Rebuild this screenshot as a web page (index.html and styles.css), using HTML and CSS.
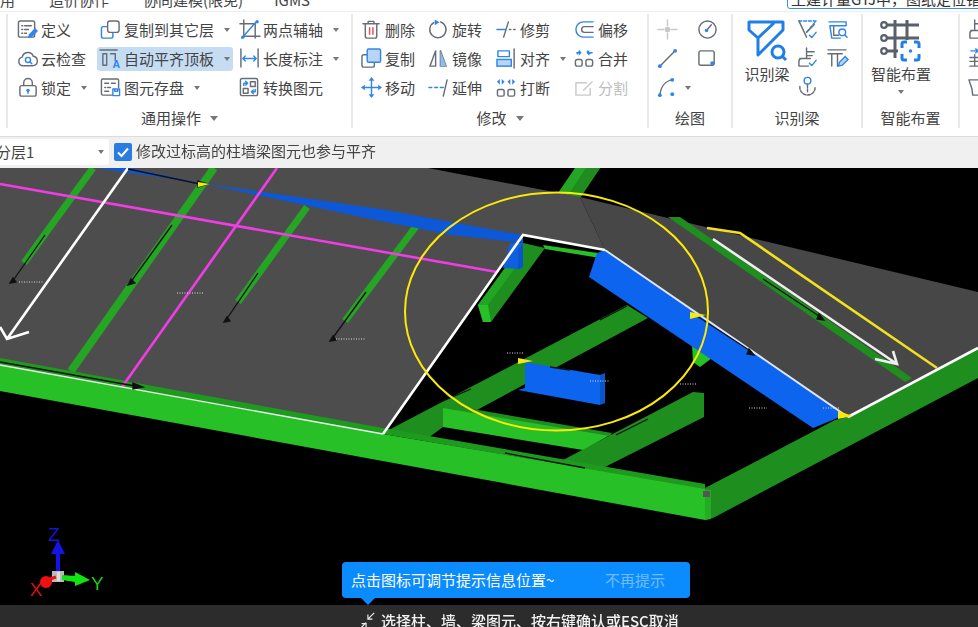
FILE: index.html
```html
<!DOCTYPE html>
<html lang="zh-CN">
<head>
<meta charset="utf-8">
<title>自动平齐顶板</title>
<link rel="stylesheet" href="styles.css">
</head>
<body>
<div class="app">
  <nav class="menu">
    <span>用</span>
    <span>造价协作</span>
    <span>协同建模(限免)</span>
    <span class="menu-last">IGMS</span>
    <div class="search">工建计量GTJ中，图纸定位错误</div>
  </nav>

  <section class="ribbon">
    <div class="group g-common">
      <div class="rows">
        <div class="tool"><svg class="ic" viewBox="0 0 22 22"><rect class="g" x="1.500" y="2" width="17" height="17" rx="2"/><path class="g" d="M5 7h1M8 7h7M5 11h1M8 11h4M5 15h1M8 15h2"/><path class="bf" d="M11.500 20l1-4 6.500-6.500 3 3-6.500 6.500z"/></svg><span>定义</span></div>
        <div class="tool"><svg class="ic" viewBox="0 0 22 22"><rect class="b" x="1.500" y="8" width="12" height="12" rx="2"/><rect class="g wf" x="8" y="2" width="12" height="12" rx="2.500"/></svg><span>复制到其它层</span><i class="caret"></i></div>
        <div class="tool"><svg class="ic" viewBox="0 0 22 22"><path class="g" d="M5 1v17h17M1 5h16v15"/><path class="b" d="M3 20L19 2"/><circle class="bf" cx="19" cy="3" r="1.800"/><circle class="bf" cx="4" cy="19" r="1.800"/></svg><span>两点辅轴</span><i class="caret"></i></div>

        <div class="tool"><svg class="ic" viewBox="0 0 22 22"><path class="g" d="M6.500 18.500a4.500 4.500 0 0 1-1-8.900 6 6 0 0 1 11.500-1 5 5 0 0 1 0 9.900z"/><circle class="b" cx="11.500" cy="12.500" r="2.700"/><path class="b" d="M13.500 14.500l2 2"/></svg><span>云检查</span></div>
        <div class="tool is-active"><svg class="ic" viewBox="0 0 22 22"><path class="g" d="M0 2h18M3 6h4v12H3zM11 6h5v7"/><text class="ic-a" x="13" y="21">A</text></svg><span>自动平齐顶板</span><i class="caret"></i></div>
        <div class="tool"><svg class="ic" viewBox="0 0 22 22"><path class="g" d="M2 1v19M20 1v19"/><path class="b" d="M4 11h14M6.500 8.500L4 11l2.500 2.500M15.500 8.500L18 11l-2.500 2.500"/></svg><span>长度标注</span><i class="caret"></i></div>

        <div class="tool"><svg class="ic lock" viewBox="0 0 22 22"><rect class="g" x="2" y="9" width="17" height="11" rx="2"/><path class="g" d="M6 9V6a4.500 4.500 0 0 1 9 0v3"/><circle class="bf" cx="10.500" cy="14" r="1.800"/><path class="b" d="M10.500 14v3"/></svg><span>锁定</span><i class="caret"></i></div>
        <div class="tool"><svg class="ic" viewBox="0 0 22 22"><path class="g" d="M13 19H3a1.500 1.500 0 0 1-1.500-1.500V3.500A1.500 1.500 0 0 1 3 2h15a1.500 1.500 0 0 1 1.500 1.500V11"/><path class="g" d="M5 6.500h4M12 6.500h4M5 11h1M8 11h3M5 15h4"/><path class="b" d="M13.500 12.500h7v7h-7zM15.500 12.500v2.500h3v-2.500"/></svg><span>图元存盘</span><i class="caret"></i></div>
        <div class="tool"><svg class="ic" viewBox="0 0 22 22"><rect class="g" x="1.500" y="1.500" width="18" height="18" rx="2"/><rect class="g" x="12" y="5" width="5" height="5"/><rect class="g" x="4.500" y="12" width="5" height="5"/><path class="b" d="M5 9V6.500h4M7 4.500L9 6.500 7 8.500M17 13v2.500h-4M15 17.500l-2-2 2-2"/></svg><span>转换图元</span></div>
      </div>
      <div class="group-label">通用操作<i class="caret caret-lg"></i></div>
    </div>

    <div class="group g-modify">
      <div class="rows">
        <div class="tool"><svg class="ic" viewBox="0 0 22 22"><path class="g" d="M2 5h17M7.500 5V2.500h6V5M4.500 5v13a2 2 0 0 0 2 2h8a2 2 0 0 0 2-2V5"/><path class="r" d="M9 9v7M12.500 9v7"/></svg><span>删除</span></div>
        <div class="tool"><svg class="ic" viewBox="0 0 22 22"><path class="g" d="M13 3a8.500 8.500 0 1 1-7 .8"/><path class="bf" d="M7 0.500l5 3-5 3z"/></svg><span>旋转</span></div>
        <div class="tool"><svg class="ic" viewBox="0 0 22 22"><path class="b" d="M1 11h9"/><path class="g" d="M8 19L13 3"/><path class="g" d="M14 11h1.500M18.500 11H20"/></svg><span>修剪</span></div>
        <div class="tool"><svg class="ic" viewBox="0 0 22 22"><path class="b" d="M20 3H10a8 8 0 0 0 0 16h10"/><path class="g" d="M20 8H11a3 3 0 0 0 0 6h9"/></svg><span>偏移</span></div>

        <div class="tool"><svg class="ic" viewBox="0 0 22 22"><rect class="g" x="1" y="7" width="13" height="13" rx="2"/><rect class="bfl" x="6.500" y="1" width="14" height="14" rx="1.500"/></svg><span>复制</span></div>
        <div class="tool"><svg class="ic" viewBox="0 0 22 22"><path class="g" d="M8 3L2 19h6zM13 3v16h6z"/><path class="blf" d="M13 3v16h6z"/></svg><span>镜像</span></div>
        <div class="tool"><svg class="ic" viewBox="0 0 22 22"><rect class="b" x="2" y="3" width="12" height="6"/><rect class="bfl" x="1" y="12" width="15" height="7"/><path class="g" d="M19 1v20"/></svg><span>对齐</span><i class="caret"></i></div>
        <div class="tool"><svg class="ic" viewBox="0 0 22 22"><rect class="g" x="1.500" y="12" width="7" height="7" rx="2"/><rect class="g" x="12.500" y="12" width="7" height="7" rx="2"/><path class="b" d="M3 5h2M17 5h2M6 3.500L3.500 6M14 3.500L16.500 6"/><path class="bf" d="M5 2l3 3-3 3zM16 2l-3 3 3 3z"/></svg><span>合并</span></div>

        <div class="tool"><svg class="ic" viewBox="0 0 22 22"><path class="b" d="M11 4v14M4 11h14"/><path class="bf" d="M11 0l3 4H8zM11 22l-3-4h6zM0 11l4-3v6zM22 11l-4 3V8z"/></svg><span>移动</span></div>
        <div class="tool"><svg class="ic" viewBox="0 0 22 22"><path class="b" d="M1 11h3M7 11h3M13 11h3"/><path class="g" d="M16 20l4-17"/></svg><span>延伸</span></div>
        <div class="tool"><svg class="ic" viewBox="0 0 22 22"><rect class="g" x="1.500" y="13" width="7" height="7" rx="1.500"/><rect class="g" x="12.500" y="13" width="7" height="7" rx="1.500"/><path class="bf" d="M1 5l3-3v6zM9 5L6 2v6zM12 5l3-3v6zM20 5l-3-3v6z"/></svg><span>打断</span></div>
        <div class="tool is-disabled"><svg class="ic" viewBox="0 0 22 22"><path class="lg" d="M13 6H2v13h15v-7"/><path class="lg" d="M10 14l9-9"/></svg><span>分割</span></div>
      </div>
      <div class="group-label">修改<i class="caret caret-lg"></i></div>
    </div>

    <div class="group g-draw">
      <div class="rows">
        <div class="tool"><svg class="ic" viewBox="0 0 22 22"><path class="lg" d="M11 1v6M11 15v6M1 11h6M15 11h6"/><circle class="lgf" cx="11" cy="11" r="3"/></svg></div>
        <div class="tool"><svg class="ic" viewBox="0 0 22 22"><circle class="g" cx="11" cy="11" r="9"/><path class="g" d="M10 12l5-6"/><circle class="bf" cx="10" cy="12" r="1.800"/></svg></div>
        <div class="tool"><svg class="ic" viewBox="0 0 22 22"><path class="g" d="M3 19L19 3"/><circle class="bf" cx="3" cy="19" r="2"/><circle class="bf" cx="19" cy="3" r="2"/></svg></div>
        <div class="tool"><svg class="ic" viewBox="0 0 22 22"><rect class="g" x="2" y="3" width="16" height="15" rx="2"/><circle class="bf" cx="16" cy="16" r="2"/></svg></div>
        <div class="tool tool-arc"><svg class="ic" viewBox="0 0 22 22"><path class="g" d="M3 19C4 10 9 4 16 3"/><circle class="bf" cx="3" cy="19" r="2"/><circle class="bf" cx="16" cy="3" r="2"/><circle class="bf" cx="16" cy="18" r="2"/></svg><i class="caret"></i></div>
      </div>
      <div class="group-label">绘图</div>
    </div>

    <div class="group g-detect">
      <div class="top">
        <div class="big">
          <svg class="ic-big" viewBox="0 0 40 40"><path class="b2" d="M2 2h34v8L11 35V18L2 10zM27 3L11 18"/><circle class="b2" cx="31" cy="32" r="6"/><path class="b2" d="M35.500 36.500L39 40"/></svg>
          <span>识别梁</span>
        </div>
        <div class="mini">
          <svg class="ic" viewBox="0 0 22 22"><path class="bd" d="M2 2h18l-10 12"/><path class="g" d="M2 2l8 17M18 6l-8 8"/><path class="b" d="M13 17l2.500 2.500L20 14"/></svg>
          <svg class="ic" viewBox="0 0 22 22"><path class="b" d="M2 3h18v4H3l2 13h9"/><path class="g" d="M7 8v9h5"/><circle class="b" cx="16" cy="14" r="3.500"/><path class="b" d="M18.500 16.500L21 19"/></svg>
          <svg class="ic" viewBox="0 0 22 22"><path class="g" d="M10 1v10M10 5h8M10 9h6M3 12h11M2 20v-5q0-3 3-3M2 20h10"/><path class="b" d="M13 17l2.500 2.500L20 14"/></svg>
          <svg class="ic" viewBox="0 0 22 22"><path class="g" d="M1 3h19M1 7h15M5 7v13M11 7v13"/><path class="bfl" d="M12 20l1-4 6-6 3 3-6 6z"/></svg>
          <svg class="ic" viewBox="0 0 22 22"><circle class="b" cx="11" cy="6" r="3.500"/><path class="g" d="M11 10v9M3 12v1a7 7 0 0 0 16 0v-1" stroke-dasharray="3 1.500"/></svg>
        </div>
      </div>
      <div class="group-label">识别梁</div>
    </div>

    <div class="group g-smart">
      <div class="big big-smart">
        <svg class="ic-big" viewBox="0 0 40 40"><path class="d2" d="M3 5h35M3 18h35M3 31h14M14 0v38M26 0v20"/><circle class="dw" cx="3" cy="5" r="2.800"/><circle class="dw" cx="3" cy="18" r="2.800"/><circle class="dw" cx="3" cy="31" r="2.800"/><path class="b2" d="M21 28v-4a2 2 0 0 1 2-2h3M33 22h3a2 2 0 0 1 2 2v4M38 34v4a2 2 0 0 1-2 2h-3M26 40h-3a2 2 0 0 1-2-2v-4"/><circle class="bf" cx="29.500" cy="31" r="1.800"/></svg>
        <span>智能布置</span>
        <i class="caret caret-big"></i>
      </div>
      <div class="group-label">智能布置</div>
    </div>

    <div class="group g-more">
      <svg class="ic" viewBox="0 0 22 22"><path class="g" d="M7 1v10M7 5h8M3 12h11M2 20v-5q0-3 3-3M2 20h10"/></svg>
      <svg class="ic" viewBox="0 0 22 22"><path class="b" d="M3 3h8M8 1l3 2-3 2"/><path class="g" d="M7 7v12M2 10h9M2 14h9M2 19h9"/></svg>
      <svg class="ic" viewBox="0 0 22 22"><path class="g" d="M1 3h20M1 3l3 9 1 7h16"/></svg>
    </div>
  </section>

  <section class="options">
    <div class="combo"><span>分层1</span><i class="caret"></i></div>
    <label class="check"><span class="box"><svg viewBox="0 0 18 18"><path d="M4 9.500l3.500 3.500L14 5.500"/></svg></span><span>修改过标高的柱墙梁图元也参与平齐</span></label>
  </section>

  <main class="canvas">
    <svg class="scene" viewBox="0 168 978 437">
      <!-- far side, lower beams -->
      <polygon fill="#25a525" points="575,168 600,168 580,198 558,193"/>
      <polygon fill="#1e8c1e" points="586,168 600,168 580,198 568,195"/>
      <polygon fill="#27c027" points="543,245 598,253 600,258 545,249"/>
      <polygon fill="#1e8e1e" points="505,268 523,243 545,248 491,322 483,322 478,305"/>
      <polygon fill="#22a522" points="478,305 505,268 515,268 488,305"/>
      <polygon fill="#27c027" points="478,305 488,305 491,322 483,322"/>
      <polygon fill="#1e8e1e" points="627,305 648,318 477,410 443,405 443,427 428,438 383,433"/>
      <polygon fill="#27c027" points="692,345 712,358 700,367 693,362"/>
      <polygon fill="#1e8e1e" points="693,392 704,393 704,417 603,468 563,460"/>
      <polygon fill="#27c027" points="443,407 610,435 583,450 443,427"/>
      <polygon fill="#1e8e1e" points="443,404 612,433 610,436 443,408"/>

      <!-- roof planes -->
      <polygon fill="#4d4d4d" points="0,168 428,168 580,197 605,250 523,235 383,434 0,362"/>
      <polygon fill="#474747" points="580,197 978,292 978,348 848,417 605,250"/>

      <!-- roof beams on the left plane -->
      <g fill="none" stroke="#24a524" stroke-width="7">
        <path d="M93 168L24 263"/>
        <path stroke-width="8" d="M214 168L71 371"/>
        <path d="M307 207L238 302"/>
        <path d="M417 225L345 321"/>
      </g>
      <polygon fill="#0c58d6" points="97,168 380,209 523,235 523,243 453,235 380,221 130,168"/>
      <polygon fill="#0f5fdf" points="510,243 523,243 523,268 518,269 503,268"/>

      <polygon fill="#1e8e1e" points="668,217 680,217 912,378 905,382"/>

      <!-- front beams -->
      <polygon fill="#27c027" points="0,365 383,434 705,488 705,520 0,391"/>
      <polygon fill="#1e9a1e" points="0,358 383,428 705,484 705,489 383,434 0,365"/>
      <polygon fill="#1e8e1e" points="705,488 835,420 848,417 978,348 978,378 713,518 705,520"/>
      <polygon fill="#23ad23" points="705,490 711,490 711,519 705,520"/>
      <rect fill="#555" x="703" y="491" width="7" height="6"/>

      <!-- blue beams -->
      <polygon fill="#0d64ef" points="597,253 605,250 845,415 813,428 589,277"/>
      <polygon fill="#0d64ef" points="525,362 600,375 600,405 518,390 525,388"/>
      <polygon fill="#0a55cc" points="600,375 605,373 605,403 600,405"/>
      <polygon fill="#0a55cc" points="523,243 523,267 518,269 518,250"/>

      <!-- axis lines -->
      <g fill="none" stroke-width="2.600">
        <path stroke="#f23ce8" d="M0 184L497 272"/>
        <path stroke="#f23ce8" d="M277 168L122 387"/>
        <path stroke="#fff" d="M128 168L7 339M0 327L7 339L29 332"/>
        <path stroke="#fff" d="M383 434L523 235L605 250"/>
        <path stroke="#dfe6f7" stroke-width="2" d="M605 250L848 417"/>
        <path stroke="#fff" d="M848 417L978 348"/>
        <path stroke="#eee" stroke-width="1.300" d="M0 365L383 434"/>
        <path stroke="#eee" d="M713 239L897 364M875 359L897 364L893 351"/>
        <path stroke="#f0e020" d="M707 228L740 233L937 368"/>
      </g>

      <!-- black direction arrows -->
      <g stroke="#111" stroke-width="1.300" fill="#111">
        <path d="M45 235L12 282M10 283l6-1-3-4z"/>
        <path d="M172 225L130 283M128 285l7-2-4-4z"/>
        <path d="M258 273L226 320M224 322l6-1-3-4z"/>
        <path d="M366 292L332 339M330 341l6-1-3-4z"/>
        <path d="M128 169L200 184M198 181l10 3-10 3z"/>
        <path d="M0 362L135 386M133 383l10 4-10 2z"/>
        <path d="M763 279L822 318M819 314l5 6-7-1z"/>
        <path d="M697 316L752 352M749 349l5 6-7-1z"/>
        <path d="M600 320L627 306"/>
        <path d="M438 403L471 389"/>
        <path d="M550 367L570 370"/>
        <path d="M616 435L648 419"/>
        <path d="M505 453L585 468"/>
      </g>

      <!-- yellow markers -->
      <g fill="#f5e911">
        <path d="M198 182l12 2-12 3z"/>
        <path d="M518 358l15 3-15 3z"/>
        <path d="M690 312l16 3-16 4z"/>
        <path d="M838 411l15 5-15 3z"/>
      </g>

      <!-- unreadable labels, rendered as specks -->
      <g fill="none" stroke="#ddd" stroke-width="1" stroke-dasharray="1 1.500">
        <path d="M19 282h25"/>
        <path d="M177 293h27"/>
        <path d="M336 339h30"/>
        <path d="M507 353h16"/>
        <path d="M590 381h20"/>
        <path d="M680 384h16"/>
        <path d="M749 408h18"/>
        <path d="M823 408h17"/>
      </g>

      <ellipse cx="556.500" cy="311.500" rx="151.500" ry="119" fill="none" stroke="#fbe90a" stroke-width="2"/>

      <!-- axis gizmo -->
      <g class="gizmo">
        <path fill="#1414e6" d="M56 572V554h-5l7-14 7 14h-5v18z"/>
        <rect fill="#bbb" x="52" y="571" width="12" height="11"/>
        <rect fill="#ddd" x="57" y="572" width="3" height="9"/>
        <path fill="#0fe60f" d="M62 575l13 1v-4l15 8-15 6v-4l-13-2z"/>
        <circle fill="#f01010" cx="46" cy="582" r="6"/>
        <path fill="none" stroke="#f01010" stroke-width="3" d="M47 580l9-3"/>
        <text class="ax ax-z" x="48" y="541">Z</text>
        <text class="ax ax-y" x="91" y="590">Y</text>
        <text class="ax ax-x" x="30" y="596">X</text>
      </g>
    </svg>

    <div class="tip">
      <span>点击图标可调节提示信息位置~</span>
      <span class="tip-off">不再提示</span>
    </div>
  </main>

  <footer class="status">
    <svg class="status-ic" viewBox="0 0 20 20"><path d="M18 2L11 9M11 4v5h5M2 20l7-7M4 14h5v5"/></svg>
    <span>选择柱、墙、梁图元、按右键确认或ESC取消</span>
  </footer>
</div>
</body>
</html>
```
FILE: styles.css
```css
* { box-sizing: border-box; }
html, body { margin: 0; height: 100%; overflow: hidden; background: #000; }
body { font-family: "Noto Sans CJK SC", "Noto Sans", sans-serif; font-size: 15px; color: #444; }
.app { width: 978px; height: 627px; display: flex; flex-direction: column; overflow: hidden; filter: blur(.3px); }

.caret { display: inline-block; width: 0; height: 0; margin-left: 7px; border: 3.500px solid transparent; border-top: 4px solid #777; border-bottom: 0; flex: none; }
.caret-lg { margin-left: 9px; border-width: 4px; border-top-width: 5px; border-bottom-width: 0; }

/* menu */
.menu { height: 12px; flex: none; display: flex; align-items: flex-end; gap: 34px; background: #fff; border-bottom: 1px solid #eee; overflow: hidden; line-height: 22px; white-space: nowrap; }
.menu-last { margin-left: -3px; }
.search { flex: none; width: 200px; height: 22px; margin-left: 443px; margin-bottom: 2px; padding-left: 3px; border: 1.500px solid #3a8fe8; border-radius: 3px; background: #fff; line-height: 22px; font-size: 15px; color: #333; overflow: hidden; }

/* ribbon */
.ribbon { height: 124px; flex: none; display: flex; padding: 2px 0 8px 6px; background: #fff; }
.group { flex: none; display: flex; flex-direction: column; justify-content: space-between; border-left: 2px solid #e9e9e9; }
.g-common { width: 345px; }
.g-modify { width: 296px; }
.g-draw { width: 84px; }
.g-detect { width: 130px; }
.g-smart { width: 97px; }
.g-more { flex: 1; padding: 5px 0 0 8px; display: flex; flex-direction: column; gap: 8px; overflow: hidden; justify-content: flex-start; }
.rows { display: grid; grid-auto-rows: 29px; align-items: center; padding-top: 1px; }
.g-common .rows { grid-template-columns: 83px 139px 1fr; padding-left: 6px; }
.g-modify .rows { grid-template-columns: 67px 68px 78px 1fr; padding-left: 5px; }
.g-draw .rows { grid-template-columns: 40px 1fr; padding-left: 5px; }
.tool { height: 24px; display: flex; align-items: center; gap: 3px; padding: 0 3px; border-radius: 3px; white-space: nowrap; }
.tool.is-active { width: 136px; background: #c5dcf3; }
.tool.is-disabled { color: #bdbdbd; }
.tool-arc .caret { margin-left: 4px; }
.group-label { height: 20px; line-height: 20px; text-align: center; white-space: nowrap; display: flex; align-items: center; justify-content: center; }
.top { display: flex; padding: 6px 0 0 8px; gap: 4px; }
.big { width: 52px; display: flex; flex-direction: column; align-items: center; white-space: nowrap; }
.big span { margin-top: 2px; line-height: 24px; }
.big-smart { width: 62px; margin: 6px 0 0 7px; }
.caret-big { margin: 4px 0 0; }
.ic-big { width: 40px; height: 40px; flex: none; overflow: visible; }
.mini { display: grid; grid-template-columns: 22px 22px; column-gap: 8px; row-gap: 7px; margin-top: -1px; }
.ic { width: 21px; height: 21px; flex: none; overflow: visible; }
.lock { margin-left: 1px; margin-right: -1px; }

/* svg parts */
.g, .b, .r, .lg, .bd, .b2, .d2, .wf { fill: none; stroke-width: 1.500; stroke-linecap: round; stroke-linejoin: round; }
.g { stroke: #666d76; }
.wf { fill: #fff; }
.b { stroke: #2f86e8; }
.bd { stroke: #2f86e8; stroke-dasharray: 3 2; }
.r { stroke: #e34d4d; }
.lg { stroke: #c9c9c9; }
.lgf { fill: #c9c9c9; }
.bf { fill: #2f86e8; }
.bfl { fill: #b9d5f6; stroke: #2f86e8; stroke-width: 1.500; }
.blf { fill: #8fbdf0; stroke: none; }
.b2 { stroke: #1f7fe6; stroke-width: 3; stroke-linecap: butt; }
.d2 { stroke: #59606a; stroke-width: 3; stroke-linecap: butt; }
.dw { fill: #fff; stroke: #59606a; stroke-width: 2.200; }
.ic-a { font: 700 11px "Liberation Sans", sans-serif; fill: #2f86e8; }

/* options */
.options { height: 32px; flex: none; display: flex; align-items: center; gap: 5px; background: #f0f0f0; border-top: 1px solid #dcdcdc; padding-bottom: 2px; }
.combo { width: 109px; height: 26px; display: flex; align-items: center; justify-content: space-between; padding-right: 5px; background: #fff; border-radius: 0 3px 3px 0; overflow: hidden; }
.combo span { margin-left: -4px; }
.check { display: flex; align-items: center; gap: 4px; }
.check > span:last-child { margin-top: -2px; }
.box { width: 18px; height: 18px; border-radius: 2px; background: #2a7ce0; display: block; }
.box svg { display: block; fill: none; stroke: #fff; stroke-width: 2; }

/* canvas */
.canvas { flex: 1; position: relative; background: #000; overflow: hidden; }
.scene { display: block; width: 978px; height: 437px; }
.ax { font: 400 19px "Liberation Sans", sans-serif; }
.ax-z { fill: #1414e6; }
.ax-y { fill: #0fd90f; }
.ax-x { fill: #e01010; }
.tip { position: absolute; left: 342px; top: 394px; width: 348px; height: 36px; display: flex; align-items: center; justify-content: space-between; padding: 0 25px 2px 9px; background: #0a8cff; border-radius: 4px; color: #fff; font-size: 15px; white-space: nowrap; }
.tip::after { content: ""; position: absolute; left: 19px; bottom: -7px; border: 7px solid transparent; border-top-color: #0a8cff; border-bottom: 0; }
.tip-off { color: #71bcff; }

/* status */
.status { height: 22px; flex: none; display: flex; align-items: flex-start; gap: 5px; padding: 5px 0 0 358px; background: #2c2c2c; color: #f2f2f2; font-weight: 500; overflow: hidden; white-space: nowrap; line-height: 22px; }
.status-ic { width: 18px; height: 18px; flex: none; margin-top: 1px; fill: none; stroke: #eee; stroke-width: 1.300; }
```
